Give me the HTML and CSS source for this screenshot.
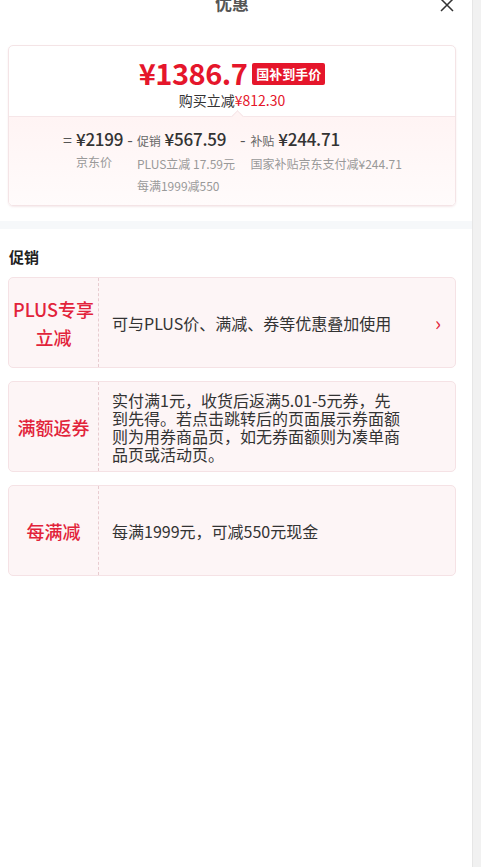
FILE: index.html
```html
<html>
	<head>
		<title>优惠</title>
		<meta charset="utf-8">
		<link rel="stylesheet" href="styles.css">
	</head>
	<body>
		<div id="panel">
			<div class="header">
				<p class="title">优惠</p>
				<span class="close">
					<svg width="16" height="16" viewBox="0 0 16 16"><path d="M2 2 L14 14 M14 2 L2 14" stroke="#333" stroke-width="1.5" fill="none"/></svg>
				</span>
			</div>

			<div class="summary">
				<div class="summary-top">
					<div class="price-line">
						<span class="price">¥1386.7</span>
						<span class="tag">国补到手价</span>
					</div>
					<p class="save">购买立减<span class="red">¥812.30</span></p>
				</div>
				<div class="summary-bottom">
					<div class="calc">
						<span class="op">=</span>
						<div class="part">
							<p class="amount">¥2199</p>
							<p class="sub">京东价</p>
						</div>
						<span class="op">-</span>
						<div class="part">
							<p class="amount"><span class="small">促销</span>¥567.59</p>
							<p class="sub">PLUS立减 17.59元</p>
							<p class="sub">每满1999减550</p>
						</div>
						<span class="op wide">-</span>
						<div class="part">
							<p class="amount"><span class="small">补贴</span>¥244.71</p>
							<p class="sub">国家补贴京东支付减¥244.71</p>
						</div>
					</div>
				</div>
			</div>

			<div class="divider"></div>

			<p class="section-title">促销</p>

			<div class="promo">
				<div class="promo-label">PLUS专享<br>立减</div>
				<div class="promo-text">可与PLUS价、满减、券等优惠叠加使用</div>
				<span class="arrow">›</span>
			</div>

			<div class="promo">
				<div class="promo-label">满额返券</div>
				<div class="promo-text">实付满1元，收货后返满5.01-5元券，先到先得。若点击跳转后的页面展示券面额则为用券商品页，如无券面额则为凑单商品页或活动页。</div>
			</div>

			<div class="promo">
				<div class="promo-label">每满减</div>
				<div class="promo-text">每满1999元，可减550元现金</div>
			</div>
		</div>
		<div id="scrollbar"></div>
	</body>
</html>
```

FILE: styles.css
```css
body {
	margin: 0;
	display: flex;
	min-height: 867px;
	background-color: white;
	color: #333;
	font-family: "Noto Sans CJK SC", "Noto Sans", sans-serif;
	overflow: hidden;
}

p {
	margin: 0;
}

#panel {
	width: 472px;
}

#scrollbar {
	flex: 1;
	background-color: #f1f1f1;
	border-left: 1px solid #e6e6e6;
}

.header {
	position: relative;
	height: 34px;
	margin-top: -14px;
	margin-bottom: 25px;
}

.title {
	text-align: center;
	font-size: 17px;
	font-weight: bold;
	color: #555;
	line-height: 34px;
	margin-left: -8px;
}

.close {
	position: absolute;
	right: 17px;
	top: 11px;
}

.summary {
	margin: 0 16px 0 8px;
	border: 1px solid #f4e4e6;
	border-radius: 5px;
	box-shadow: 0 1px 2px rgba(230, 200, 205, 0.4);
	overflow: hidden;
}

.summary-top {
	padding: 8px 0 7px 0;
	text-align: center;
}

.price-line {
	display: flex;
	justify-content: center;
	align-items: center;
	gap: 5px;
	height: 35px;
}

.price {
	color: #e5162b;
	font-size: 29px;
	line-height: 30px;
	font-weight: bold;
	letter-spacing: -0.5px;
}

.tag {
	background-color: #e5162b;
	color: white;
	font-size: 13px;
	font-weight: bold;
	padding: 0 4px;
	height: 22px;
	line-height: 22px;
	border-radius: 2px;
	margin-top: 5px;
}

.save {
	font-size: 14px;
	line-height: 18px;
	margin-top: 2px;
	color: #333;
}

.red {
	color: #e5162b;
}

.summary-bottom {
	position: relative;
	border-top: 1px solid #f6e6e8;
	background: linear-gradient(#fff4f4, #fffbfb);
	padding: 10px 0 8px 0;
}

.summary-bottom::before {
	content: "";
	position: absolute;
	left: 224px;
	top: -5px;
	width: 8px;
	height: 8px;
	background-color: #fff4f4;
	border-left: 1px solid #f6e6e8;
	border-top: 1px solid #f6e6e8;
	transform: rotate(45deg);
}

.calc {
	display: flex;
	padding-left: 50px;
}

.op {
	font-size: 16px;
	line-height: 24px;
	color: #555;
	padding: 0 4px;
}

.op.wide {
	padding: 0 5px 0 5px;
}

.amount {
	font-size: 17px;
	line-height: 24px;
	font-weight: 500;
	color: #333;
	letter-spacing: -0.2px;
}

.small {
	font-size: 12px;
	color: #666;
	font-weight: normal;
	margin-right: 4px;
}

.sub {
	font-size: 12px;
	line-height: 22px;
	color: #999;
}

.divider {
	height: 8px;
	background-color: #f6f8fa;
	margin-top: 15px;
}

.section-title {
	font-size: 15px;
	font-weight: bold;
	color: #222;
	margin: 17px 0 9px 9px;
	line-height: 22px;
}

.promo {
	display: flex;
	align-items: center;
	margin: 0 16px 13px 8px;
	height: 89px;
	background-color: #fdf5f6;
	border: 1px solid #f5e2e5;
	border-radius: 5px;
}

.promo-label {
	width: 89px;
	height: 100%;
	flex-shrink: 0;
	display: flex;
	align-items: center;
	justify-content: center;
	text-align: center;
	color: #e2233a;
	font-size: 18px;
	font-weight: 500;
	line-height: 28px;
	border-right: 1px dashed #e8ccd0;
}

.promo-text {
	flex: 1;
	padding: 0 50px 0 13px;
	font-size: 16px;
	line-height: 18px;
	color: #333;
}

.arrow {
	color: #e2233a;
	font-size: 20px;
	margin-left: -36px;
	margin-right: 14px;
}
```
